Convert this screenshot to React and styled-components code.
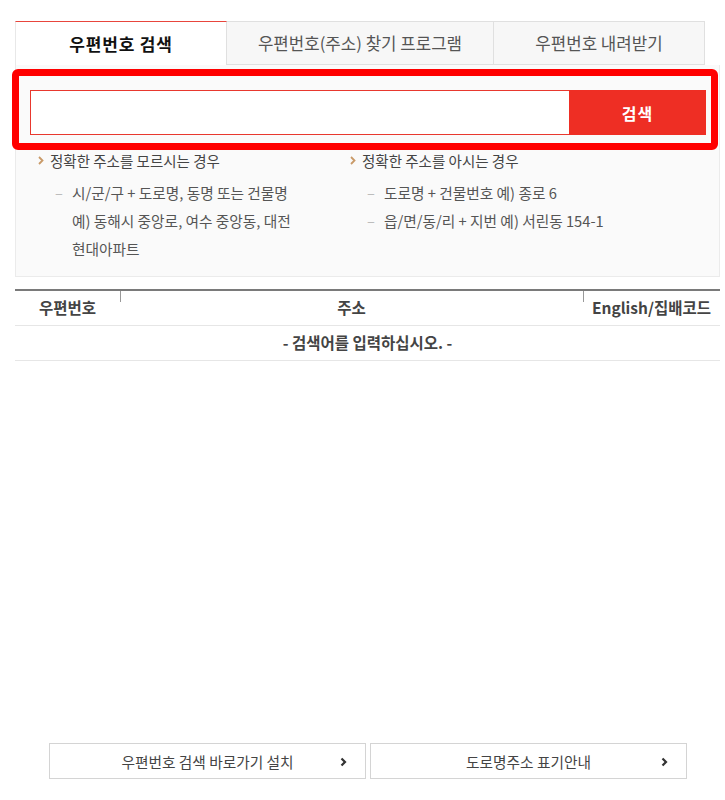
import React from 'react';
import styled, { createGlobalStyle } from 'styled-components';

const GlobalStyle = createGlobalStyle`
  html, body { margin: 0; padding: 0; background: #fff; }
  body { font-family: "Noto Sans CJK KR", "Noto Sans", sans-serif; color: #444; }
  * { box-sizing: border-box; }
`;

const tabs = [
  { label: '우편번호 검색', width: 212, active: true },
  { label: '우편번호(주소) 찾기 프로그램', width: 267 },
  { label: '우편번호 내려받기', width: 211 },
];

const Arrow = () => (
  <svg width="6" height="9" viewBox="0 0 6 9">
    <polyline points="1,1 4.5,4.5 1,8" fill="none" stroke="#c99a68" strokeWidth="1.8" />
  </svg>
);

const Chevron = () => (
  <svg width="7" height="10" viewBox="0 0 7 10">
    <polyline points="1.5,1.5 5,5 1.5,8.5" fill="none" stroke="#333" strokeWidth="2.2" />
  </svg>
);

export default () => {
  return (
    <Page>
      <GlobalStyle />
      <TabBar>
        {tabs.map((t) => (
          <Tab key={t.label} $width={t.width} $active={t.active}>{t.label}</Tab>
        ))}
      </TabBar>
      <Panel>
        <SearchRow>
          <SearchInput type='text' />
          <SearchButton>{'검색'}</SearchButton>
        </SearchRow>
        <Highlight />
        <Guide>
          <GuideColumn>
            <GuideTitle><Arrow />{'정확한 주소를 모르시는 경우'}</GuideTitle>
            <GuideItem>
              <Dash>{'–'}</Dash>
              <span>
                {'시/군/구 + 도로명, 동명 또는 건물명'}<br />
                {'예) 동해시 중앙로, 여수 중앙동, 대전'}<br />
                {'현대아파트'}
              </span>
            </GuideItem>
          </GuideColumn>
          <GuideColumn>
            <GuideTitle><Arrow />{'정확한 주소를 아시는 경우'}</GuideTitle>
            <GuideItem>
              <Dash>{'–'}</Dash>
              <span>{'도로명 + 건물번호 예) 종로 6'}</span>
            </GuideItem>
            <GuideItem>
              <Dash>{'–'}</Dash>
              <span>{'읍/면/동/리 + 지번 예) 서린동 154-1'}</span>
            </GuideItem>
          </GuideColumn>
        </Guide>
      </Panel>
      <ResultTable>
        <HeadRow>
          <HeadCell>{'우편번호'}</HeadCell>
          <HeadCell $tick>{'주소'}</HeadCell>
          <HeadCell $tick>{'English/집배코드'}</HeadCell>
        </HeadRow>
        <EmptyRow>{'- 검색어를 입력하십시오. -'}</EmptyRow>
      </ResultTable>
      <Footer>
        <LinkButton>{'우편번호 검색 바로가기 설치'}<ChevronWrap><Chevron /></ChevronWrap></LinkButton>
        <LinkButton>{'도로명주소 표기안내'}<ChevronWrap><Chevron /></ChevronWrap></LinkButton>
      </Footer>
    </Page>
  );
};

const Page = styled.div`
  position: relative;
  height: 800px;
  display: flex;
  flex-direction: column;
`;

const TabBar = styled.div`
  display: flex;
  margin: 21px 20px 0 15px;
`;

const Tab = styled.div`
  width: ${(p) => p.$width}px;
  height: 44px;
  display: flex;
  align-items: center;
  justify-content: center;
  background: ${(p) => (p.$active ? '#fff' : '#f7f7f7')};
  border: 1px solid #e0e0e0;
  border-left: ${(p) => (p.$active ? '1px solid #e8e8e8' : 'none')};
  border-top: ${(p) => (p.$active ? '1px solid #e8453c' : '1px solid #e0e0e0')};
  border-bottom: ${(p) => (p.$active ? 'none' : '1px solid #e0e0e0')};
  font-size: ${(p) => (p.$active ? '17px' : '16.8px')};
  font-weight: ${(p) => (p.$active ? 700 : 400)};
  letter-spacing: ${(p) => (p.$active ? '0.8px' : '0')};
  color: ${(p) => (p.$active ? '#111' : '#555')};
`;

const Panel = styled.div`
  position: relative;
  margin: 0 5px 0 15px;
  border: 1px solid #ebebeb;
  border-top: none;
  background: #fafafa;
  padding: 25px 13px 13px 14px;
`;

const SearchRow = styled.div`
  display: flex;
  height: 45px;
  background: #fff;
`;

const SearchInput = styled.input`
  flex: 1;
  border: 1px solid #e8382e;
  border-right: none;
  outline: none;
  background: #fff;
  margin: 0;
`;

const SearchButton = styled.button`
  width: 137px;
  border: none;
  background: #ee2e24;
  color: #fff;
  font-family: inherit;
  font-size: 16px;
  font-weight: 700;
  letter-spacing: 1px;
  margin: 0;
`;

const Highlight = styled.div`
  position: absolute;
  left: -4px;
  top: 4px;
  width: 706px;
  height: 81px;
  border: 7px solid #ff0000;
  border-radius: 6px;
  pointer-events: none;
`;

const Guide = styled.div`
  display: grid;
  grid-template-columns: 312px 1fr;
  padding-left: 8px;
  margin-top: 15px;
`;

const GuideColumn = styled.div`
  display: flex;
  flex-direction: column;
`;

const GuideTitle = styled.div`
  display: flex;
  align-items: center;
  gap: 6px;
  height: 20px;
  font-size: 14.5px;
  color: #444;
  margin-bottom: 9px;
`;

const GuideItem = styled.div`
  display: flex;
  font-size: 14.7px;
  line-height: 28px;
  color: #555;
`;

const Dash = styled.span`
  width: 17px;
  margin-left: 17px;
  color: #bbb;
  flex-shrink: 0;
`;

const ResultTable = styled.div`
  margin: 12px 5px 0 15px;
  border-top: 2px solid #7a7a7a;
`;

const HeadRow = styled.div`
  display: grid;
  grid-template-columns: 105px 463px 1fr;
  height: 35px;
  padding-bottom: 2px;
  border-bottom: 1px solid #e6e6e6;
`;

const HeadCell = styled.div`
  position: relative;
  display: flex;
  align-items: center;
  justify-content: center;
  font-size: 15.5px;
  font-weight: 700;
  color: #444;
  &::before {
    content: '';
    display: ${(p) => (p.$tick ? 'block' : 'none')};
    position: absolute;
    left: 0;
    top: 0;
    width: 1px;
    height: 11px;
    background: #999;
  }
`;

const EmptyRow = styled.div`
  height: 35px;
  padding-bottom: 2px;
  display: flex;
  align-items: center;
  justify-content: center;
  border-bottom: 1px solid #e6e6e6;
  font-size: 15.5px;
  font-weight: 700;
  color: #444;
`;

const Footer = styled.div`
  margin-top: auto;
  margin-bottom: 21px;
  margin-left: 49px;
  display: flex;
  gap: 4px;
`;

const LinkButton = styled.div`
  position: relative;
  width: 317px;
  height: 36px;
  display: flex;
  align-items: center;
  justify-content: center;
  border: 1px solid #d4d4d4;
  background: #fff;
  font-size: 14.7px;
  color: #444;
`;

const ChevronWrap = styled.span`
  position: absolute;
  right: 18px;
  top: 13px;
  display: flex;
`;
